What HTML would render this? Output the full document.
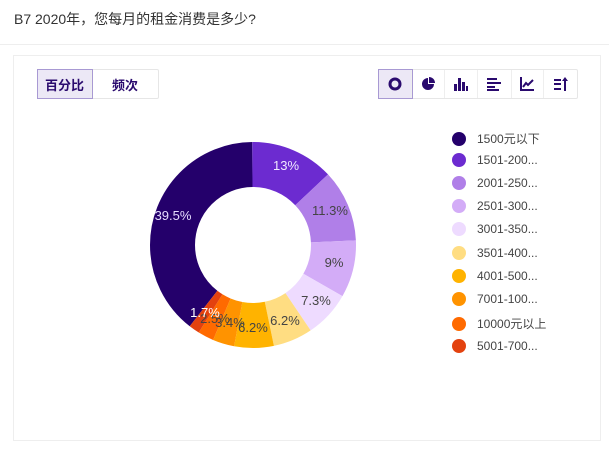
<!DOCTYPE html>
<html><head><meta charset="utf-8"><style>
*{margin:0;padding:0;box-sizing:border-box}
body{width:609px;height:449px;background:#fff;font-family:"Liberation Sans","Noto Sans CJK SC",sans-serif;position:relative;overflow:hidden}
.title{position:absolute;left:14px;top:9px;font-size:14px;color:#333}
.sep{position:absolute;left:0;right:0;top:44px;height:1px;background:#eee}
.card{position:absolute;left:13px;top:55px;width:588px;height:386px;border:1px solid #eee}
.grp{position:absolute;top:69px;height:30px;display:flex;border:1px solid #e6e6e6;border-radius:2px;background:#fff}
.grp div{height:28px;display:flex;align-items:center;justify-content:center;border-right:1px solid #eee;font-size:13px;font-weight:bold;color:#2a0a6e}
.grp div:last-child{border-right:none}
.grp .on{background:#ece8f6;outline:1px solid #a899d3}
.leg{position:absolute;left:452px;font-size:12px;color:#444;display:flex;align-items:center}
.leg i{width:14px;height:14px;border-radius:50%;display:inline-block;margin-right:11px}
</style></head><body>
<div class="title">B7 2020年，您每月的租金消费是多少?</div>
<div class="sep"></div>
<div class="card"></div>
<div class="grp" style="left:37px;width:122px"><div class="on" style="width:54px">百分比</div><div style="width:66px">频次</div></div>
<div class="grp" style="left:378px;width:200px">
<div class="on" style="width:33px"><svg width="14" height="14"><circle cx="7" cy="7" r="5" fill="none" stroke="#2a0a6e" stroke-width="3"/></svg></div>
<div style="width:34px"><svg width="14" height="14"><path d="M7 1A6 6 0 1 0 13 7H7Z" fill="#2a0a6e"/><path d="M8 0A6 6 0 0 1 14 6H8Z" fill="#2a0a6e"/></svg></div>
<div style="width:33px"><svg width="14" height="14" fill="#2a0a6e"><rect x="0" y="7" width="3" height="7"/><rect x="4" y="1" width="3" height="13"/><rect x="8" y="5" width="3" height="9"/><rect x="12" y="9" width="2" height="5"/></svg></div>
<div style="width:34px"><svg width="14" height="14" fill="#2a0a6e"><rect x="0" y="1" width="10" height="2"/><rect x="0" y="5" width="14" height="2"/><rect x="0" y="9" width="8" height="2"/><rect x="0" y="12" width="12" height="2"/></svg></div>
<div style="width:33px"><svg width="14" height="14" fill="none" stroke="#2a0a6e" stroke-width="2"><path d="M1 0V13H14"/><path d="M3 10L6 6L8 8L13 3"/></svg></div>
<div style="width:33px"><svg width="14" height="14" fill="#2a0a6e"><rect x="0" y="2" width="7" height="2"/><rect x="0" y="6" width="7" height="2"/><rect x="0" y="11" width="7" height="2"/><rect x="10" y="3" width="2" height="11"/><path d="M11 0L14 4H8Z"/></svg></div>
</div>
<svg style="position:absolute;left:0;top:0" width="609" height="449">
<g transform="rotate(-90 253 245)" fill="none" stroke-width="45">
<circle cx="253" cy="245" r="80.5" pathLength="100" stroke="#24006b" stroke-dasharray="39.4 60.6" stroke-dashoffset="-60.6"/>
<circle cx="253" cy="245" r="80.5" pathLength="100" stroke="#6c2bd0" stroke-dasharray="13 87" stroke-dashoffset="0"/>
<circle cx="253" cy="245" r="80.5" pathLength="100" stroke="#b07fe8" stroke-dasharray="11.3 88.7" stroke-dashoffset="-13"/>
<circle cx="253" cy="245" r="80.5" pathLength="100" stroke="#d3acf7" stroke-dasharray="9 91" stroke-dashoffset="-24.3"/>
<circle cx="253" cy="245" r="80.5" pathLength="100" stroke="#eedbff" stroke-dasharray="7.3 92.7" stroke-dashoffset="-33.3"/>
<circle cx="253" cy="245" r="80.5" pathLength="100" stroke="#ffdd82" stroke-dasharray="6.2 93.8" stroke-dashoffset="-40.6"/>
<circle cx="253" cy="245" r="80.5" pathLength="100" stroke="#ffb300" stroke-dasharray="6.2 93.8" stroke-dashoffset="-46.8"/>
<circle cx="253" cy="245" r="80.5" pathLength="100" stroke="#ff9300" stroke-dasharray="3.4 96.6" stroke-dashoffset="-53"/>
<circle cx="253" cy="245" r="80.5" pathLength="100" stroke="#ff6a00" stroke-dasharray="2.5 97.5" stroke-dashoffset="-56.4"/>
<circle cx="253" cy="245" r="80.5" pathLength="100" stroke="#e3420f" stroke-dasharray="1.7 98.3" stroke-dashoffset="-58.9"/>
</g>
<g font-size="13" text-anchor="middle" font-family="Liberation Sans,sans-serif">
<text x="286" y="170" fill="#f0e8ff">13%</text>
<text x="330" y="215" fill="#444">11.3%</text>
<text x="334" y="267" fill="#444">9%</text>
<text x="316" y="305" fill="#444">7.3%</text>
<text x="285" y="325" fill="#444">6.2%</text>
<text x="253" y="332" fill="#444">6.2%</text>
<text x="230" y="327" fill="#444">3.4%</text>
<text x="215" y="323" fill="#444">2.5%</text>
<text x="205" y="317" fill="#fff">1.7%</text>
<text x="173" y="220" fill="#e6dcff">39.5%</text>
</g>
</svg>
<div class="leg" style="top:130px"><i style="background:#24006b"></i>1500元以下</div>
<div class="leg" style="top:153px"><i style="background:#6c2bd0"></i>1501-200...</div>
<div class="leg" style="top:176px"><i style="background:#b07fe8"></i>2001-250...</div>
<div class="leg" style="top:199px"><i style="background:#d3acf7"></i>2501-300...</div>
<div class="leg" style="top:222px"><i style="background:#eedbff"></i>3001-350...</div>
<div class="leg" style="top:246px"><i style="background:#ffdd82"></i>3501-400...</div>
<div class="leg" style="top:269px"><i style="background:#ffb300"></i>4001-500...</div>
<div class="leg" style="top:292px"><i style="background:#ff9300"></i>7001-100...</div>
<div class="leg" style="top:315px"><i style="background:#ff6a00"></i>10000元以上</div>
<div class="leg" style="top:339px"><i style="background:#e3420f"></i>5001-700...</div>
</body></html>
